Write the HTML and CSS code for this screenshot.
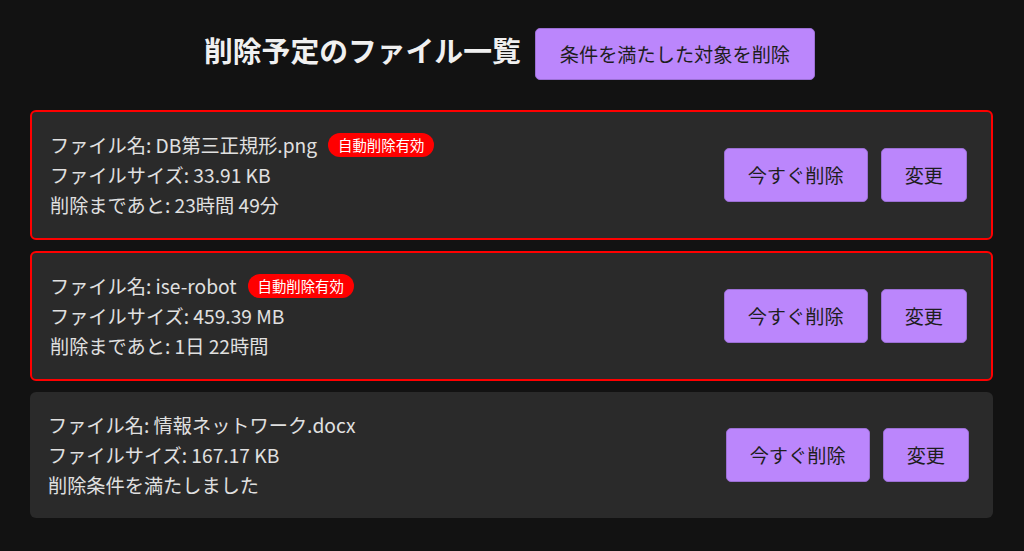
FILE: index.html
```html
<!DOCTYPE html>
<html lang="ja">
<head>
<meta charset="utf-8">
<title>削除予定のファイル一覧</title>
<link rel="stylesheet" href="styles.css">
</head>
<body>
<div class="page">
  <header class="header">
    <h1 class="title">削除予定のファイル一覧</h1>
    <button class="btn btn-header">条件を満たした対象を削除</button>
  </header>
  <main class="list">
    <section class="card card-auto">
      <div class="info">
        <div class="line">ファイル名: DB第三正規形.png<span class="badge">自動削除有効</span></div>
        <div class="line">ファイルサイズ: 33.91 KB</div>
        <div class="line">削除まであと: 23時間 49分</div>
      </div>
      <div class="actions">
        <button class="btn">今すぐ削除</button>
        <button class="btn">変更</button>
      </div>
    </section>
    <section class="card card-auto">
      <div class="info">
        <div class="line">ファイル名: ise-robot<span class="badge">自動削除有効</span></div>
        <div class="line">ファイルサイズ: 459.39 MB</div>
        <div class="line">削除まであと: 1日 22時間</div>
      </div>
      <div class="actions">
        <button class="btn">今すぐ削除</button>
        <button class="btn">変更</button>
      </div>
    </section>
    <section class="card">
      <div class="info">
        <div class="line">ファイル名: 情報ネットワーク.docx</div>
        <div class="line">ファイルサイズ: 167.17 KB</div>
        <div class="line">削除条件を満たしました</div>
      </div>
      <div class="actions">
        <button class="btn">今すぐ削除</button>
        <button class="btn">変更</button>
      </div>
    </section>
  </main>
</div>
</body>
</html>
```
FILE: styles.css
```css
* { box-sizing: border-box; }
html, body {
  margin: 0;
  padding: 0;
  background: #121212;
}
body {
  font-family: "Noto Sans CJK JP", "Noto Sans", sans-serif;
  color: #e0e0e0;
}
.page {
  padding: 28px 31px 0 30px;
}
.header {
  display: flex;
  justify-content: center;
  align-items: baseline;
  gap: 14px;
  margin-bottom: 30px;
  padding-right: 4px;
}
.title {
  margin: 0;
  font-size: 28.8px;
  font-weight: 700;
  color: #f0f0f0;
  line-height: 1.4;
}
.btn {
  font-family: inherit;
  font-size: 19.2px;
  line-height: 28px;
  color: #1e1e1e;
  background: #bb86fc;
  border: 1px solid #9b6fd4;
  border-radius: 5px;
  padding: 12px 23px;
  cursor: pointer;
}
.btn-header {
  padding: 11px 24px;
}
.list {
  display: flex;
  flex-direction: column;
  gap: 11px;
}
.card {
  display: flex;
  justify-content: space-between;
  align-items: center;
  background: #2a2a2a;
  border-radius: 6px;
  padding: 18px 24px 18px 18px;
}
.card-auto {
  border: 2px solid #ff0000;
}
.line {
  font-size: 19.2px;
  line-height: 30px;
  display: flex;
  align-items: center;
}
.badge {
  display: inline-block;
  margin-left: 11px;
  background: #ff0000;
  color: #ffffff;
  font-size: 14.4px;
  line-height: 20px;
  padding: 2px 10px;
  border-radius: 12px;
}
.actions {
  display: flex;
  gap: 13px;
}
```
